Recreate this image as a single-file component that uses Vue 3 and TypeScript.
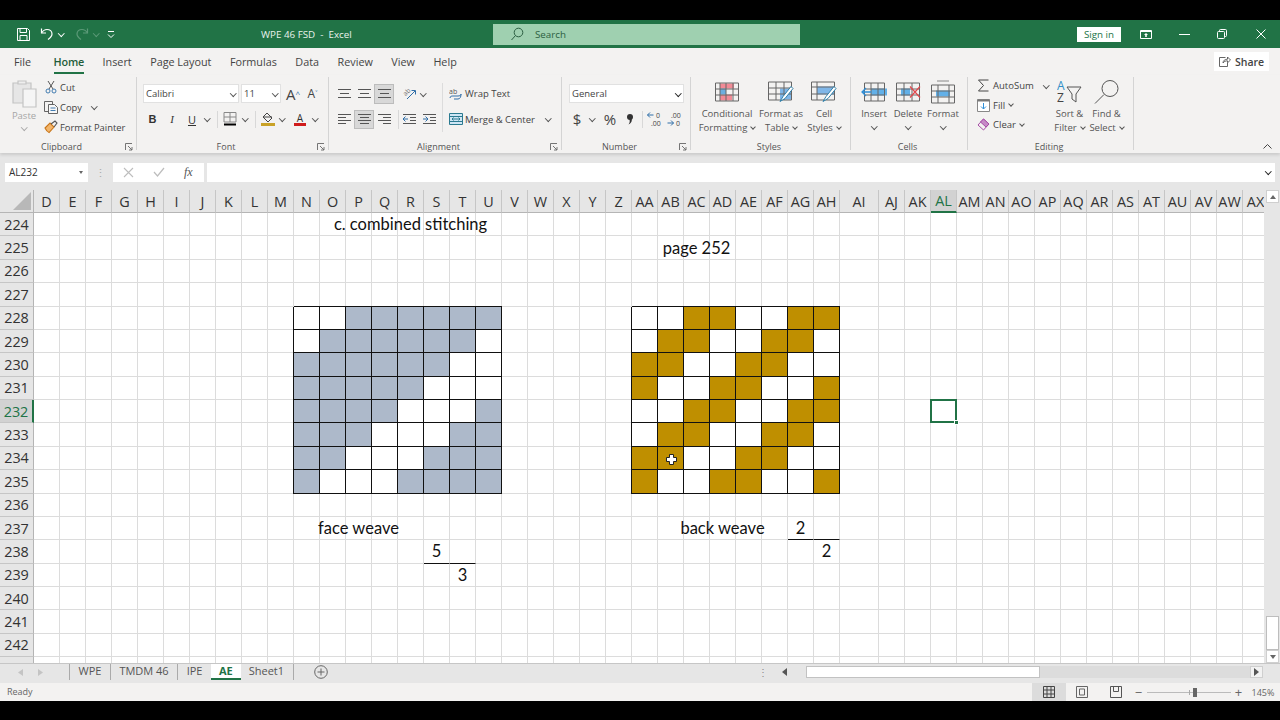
<script setup lang="ts">
const base = 'D E F G H I J K L M N O P Q R S T U V W X Y Z AA AB AC AD AE AF AG AH AI AJ AK AL AM AN AO AP AQ AR AS AT AU AV AW AX'.split(' ')
const rowNums: number[] = []
for (let r = 224; r <= 243; r++) rowNums.push(r)
const texts: Record<string, string> = {
  R224: 'c. combined stitching', AC225: 'page 252', P237: 'face weave', AD237: 'back weave',
  AG237: '2', AH238: '2', S238: '5', T239: '3'
}
const rules = new Set(['AG237', 'AH237', 'S238', 'T238'])
const face = ['00111111', '01111110', '11111100', '11111000', '11110001', '11100011', '11000111', '10001111']
const back = ['00110011', '01100110', '11001100', '10011001', '00110011', '01100110', '11001100', '10011001']
function cellClass(col: string, row: number): string[] {
  const id = col + row
  const out: string[] = []
  const ci = base.indexOf(col)
  if (row >= 228 && row <= 235) {
    const fi = ci - base.indexOf('N')
    const bi = ci - base.indexOf('AA')
    if (fi >= 0 && fi < 8) out.push('pat', face[row - 228][fi] === '1' ? 'grey' : 'blank')
    if (bi >= 0 && bi < 8) out.push('pat', back[row - 228][bi] === '1' ? 'gold' : 'blank')
  }
  if (rules.has(id)) out.push('rule')
  if (id === 'AL232') out.push('sel')
  return out
}
const tabs = ['File', 'Home', 'Insert', 'Page Layout', 'Formulas', 'Data', 'Review', 'View', 'Help']
</script>

<template>
  <div class="screen">
    <header class="titlebar">
      <div class="qa">
        <svg class="i-save" width="15" height="15" viewBox="0 0 15 15" fill="none" stroke="#fff" stroke-width="1"><path d="M1.5 1.5h10l2 2v10h-12z" /><path d="M4 1.5v4h6.5v-4M4 13.5v-5h7v5" /></svg>
        <svg class="i-undo" width="14" height="14" viewBox="0 0 14 14" fill="none" stroke="#fff" stroke-width="1.2"><path d="M1.5 1.5v4.5h4.5" /><path d="M1.5 6C3 3.5 5 2.5 7 2.5c3 0 5 2 5 4.5 0 2.500-2 4-4 5.500" /></svg>
        <span class="chev white" />
        <svg class="i-redo" width="14" height="14" viewBox="0 0 14 14" fill="none" stroke="#5c9a78" stroke-width="1.2"><path d="M12.500 1.500v4.500h-4.500" /><path d="M12.500 6C11 3.500 9 2.500 7 2.500c-3 0-5 2-5 4.500 0 2.500 2 4 4 5.500" /></svg>
        <span class="chev dimwhite" />
        <svg class="i-cust" width="8" height="9" viewBox="0 0 8 9" fill="none" stroke="#fff" stroke-width="1"><path d="M1 1.500h6" /><path d="M1 4.500l3 3 3-3" /></svg>
      </div>
      <div class="doc">WPE 46 FSD&nbsp; -&nbsp; Excel</div>
      <div class="search">
        <svg width="14" height="14" viewBox="0 0 14 14" fill="none" stroke="#2c5f42" stroke-width="1"><circle cx="8.500" cy="5.500" r="4.300" /><path d="M5.500 8.500L1.500 13" /></svg>
        <span>Search</span>
      </div>
      <button class="signin">Sign in</button>
      <svg class="i-disp" width="12" height="9" viewBox="0 0 12 9" fill="none" stroke="#fff"><path d="M.5.500h11v8H.5z" /><path d="M.5 1.500h11" /><path d="M6 3L4 5h1.200v2h1.600V5H8z" fill="#fff" stroke="none" /></svg>
      <svg class="i-min" width="11" height="1" viewBox="0 0 11 1" fill="#fff"><path d="M0 0h11v1H0z" /></svg>
      <svg class="i-rest" width="10" height="10" viewBox="0 0 10 10" fill="none" stroke="#fff"><rect x=".5" y="2.500" width="7" height="7" rx="1" /><path d="M2.500 2.500v-1a1 1 0 0 1 1-1h5a1 1 0 0 1 1 1v5a1 1 0 0 1-1 1h-1" /></svg>
      <svg class="i-close" width="10" height="10" viewBox="0 0 10 10" stroke="#fff"><path d="M.5.500l9 9M9.500.500l-9 9" /></svg>
    </header>

    <nav class="tabs">
      <span v-for="t in tabs" :key="t" class="tab" :class="{ on: t === 'Home' }">{{ t }}</span>
      <button class="share">
        <svg width="12" height="11" viewBox="0 0 12 11" fill="none" stroke="#555" stroke-width=".9"><path d="M6.500 1.500H.5v9h8V7" /><path d="M4 7c0-2.500 2-3.800 4.500-3.800V1L11.500 4 8.500 6.800V4.800C6.500 4.800 5 5.500 4 7z" /></svg>
        Share
      </button>
    </nav>

    <section class="ribbon">
      <div class="group g-clip">
        <div class="body row">
          <div class="paste">
            <svg width="26" height="29" viewBox="0 0 26 29" fill="none" stroke="#c4c4c4" stroke-width="1.2"><path d="M2 4h18v20H2z" fill="#e6e6e6" /><path d="M7 5V2h8v3z" fill="#eee" /><path d="M12 10h13v18H12z" fill="#f5f5f5" /></svg>
            <span class="pl">Paste</span>
            <span class="chev faint" />
          </div>
          <div class="clip-list">
            <div class="cl">
              <svg width="12" height="14" viewBox="0 0 12 14" fill="none" stroke="#444" stroke-width=".9"><path d="M3 1l5 8M9 1L4 9" /><circle cx="3" cy="11" r="2" stroke="#2f6ea8" /><circle cx="9" cy="11" r="2" stroke="#2f6ea8" /></svg>
              <span>Cut</span>
            </div>
            <div class="cl">
              <svg width="14" height="13" viewBox="0 0 14 13" fill="none" stroke="#555" stroke-width=".9"><path d="M.5.500h8v3M.5.500v10h4" /><path d="M4.500 3.500h6l3 3v6h-9z" fill="#f8f8f8" /><path d="M6.500 7h5M6.500 9.500h5" stroke="#2f6ea8" /></svg>
              <span>Copy</span><span class="chev sm-gap" />
            </div>
            <div class="cl">
              <svg width="14" height="14" viewBox="0 0 14 14" fill="none" stroke-width="1.100"><path d="M1 8l5-5 4 4-5 5.500C3.500 12 2 10 1 8z" fill="#f2b56b" stroke="#c9761a" /><path d="M7 4l4-3 2 2-3 4" stroke="#555" /></svg>
              <span>Format Painter</span>
            </div>
          </div>
        </div>
        <div class="glabel launcher">Clipboard
          <svg class="launch" width="8" height="8" viewBox="0 0 8 8" fill="none" stroke="#666" stroke-width=".9"><path d="M.5 7V.5H7M3 3l4 4M7 4v3H4" /></svg>
        </div>
      </div>

      <div class="group g-font">
        <div class="body stack">
          <div class="line">
            <div class="select s-font">Calibri<span class="chev" /></div>
            <div class="select s-size">11<span class="chev" /></div>
            <span class="tb big-a">A<sup>^</sup></span>
            <span class="tb small-a">A<sup>˅</sup></span>
          </div>
          <div class="line">
            <span class="tb w19 bold">B</span>
            <span class="tb w20 ital">I</span>
            <span class="tb w20 under">U</span>
            <span class="cbox"><span class="chev" /></span>
            <span class="vr m5" />
            <span class="tb w20">
              <svg width="14" height="14" viewBox="0 0 14 14" fill="none"><path d="M1 .5h12v9.500H1zM7 .5v9.500M1 5h12" stroke="#888" /><path d="M1 12.500h12" stroke="#000" stroke-width="2" /></svg>
            </span>
            <span class="cbox"><span class="chev" /></span>
            <span class="vr m5" />
            <span class="tb w20">
              <svg width="14" height="14" viewBox="0 0 14 14" fill="none"><path d="M6 1l5 5-4 4-5-5z" stroke="#444" /><path d="M2 5h9" stroke="#444" /><path d="M0 12.500h14" stroke="#c9a227" stroke-width="3" /></svg>
            </span>
            <span class="cbox w9"><span class="chev" /></span>
            <span class="tb w20 m3">
              <svg width="14" height="15" viewBox="0 0 14 15"><text x="7" y="9.500" text-anchor="middle" font-family="Open Sans, sans-serif" font-size="10" fill="#333">A</text><path d="M1 11h12v3H1z" fill="#d01c1c" /></svg>
            </span>
            <span class="cbox"><span class="chev" /></span>
          </div>
        </div>
        <div class="glabel launcher">Font
          <svg class="launch" width="8" height="8" viewBox="0 0 8 8" fill="none" stroke="#666" stroke-width=".9"><path d="M.5 7V.5H7M3 3l4 4M7 4v3H4" /></svg>
        </div>
      </div>

      <div class="group g-align">
        <div class="body row">
          <div class="stack col-a">
            <div class="line">
              <span class="tb w20"><svg width="13" height="9" viewBox="0 0 13 9" stroke="#555"><path d="M0 .5h13M2 4.500h9M0 8.500h13" /></svg></span>
              <span class="tb w20"><svg width="13" height="9" viewBox="0 0 13 9" stroke="#555"><path d="M0 .5h13M2 4.500h9M0 8.500h13" /></svg></span>
              <span class="tb w20 active"><svg width="13" height="9" viewBox="0 0 13 9" stroke="#555"><path d="M0 .5h13M2 4.500h9M0 8.500h13" /></svg></span>
            </div>
            <div class="line">
              <span class="tb w20"><svg width="13" height="11" viewBox="0 0 13 11" stroke="#555"><path d="M0 .5h13M0 3.500h8M0 6.500h13M0 9.500h8" /></svg></span>
              <span class="tb w20 active"><svg width="13" height="11" viewBox="0 0 13 11" stroke="#555"><path d="M0 .5h13M2 3.500h9M0 6.500h13M2 9.500h9" /></svg></span>
              <span class="tb w20"><svg width="13" height="11" viewBox="0 0 13 11" stroke="#555"><path d="M0 .5h13M5 3.500h8M0 6.500h13M5 9.500h8" /></svg></span>
            </div>
          </div>
          <div class="stack col-b">
            <div class="line">
              <span class="tb w20"><svg width="15" height="15" viewBox="0 0 15 15" fill="none" stroke="#666"><text x="1" y="8" transform="rotate(-45 5 6)" font-family="Open Sans, sans-serif" font-size="6.500" fill="#666" stroke="none">ab</text><path d="M5 13l8-8" stroke="#2f6ea8" /><path d="M9.500 4.500h4V8.500" stroke="#2f6ea8" /></svg></span>
              <span class="cbox w8"><span class="chev" /></span>
            </div>
            <div class="line ruled">
              <span class="tb w20"><svg width="13" height="11" viewBox="0 0 13 11" fill="none" stroke="#555"><path d="M0 .5h13M7 3.500h6M7 6.500h6M0 9.500h13" /><path d="M0 5h5M2.500 2.500L0 5l2.500 2.500" stroke="#2f6ea8" /></svg></span>
              <span class="tb w20"><svg width="13" height="11" viewBox="0 0 13 11" fill="none" stroke="#555"><path d="M0 .5h13M7 3.500h6M7 6.500h6M0 9.500h13" /><path d="M0 5h5M2.500 2.500L5 5 2.500 7.500" stroke="#2f6ea8" /></svg></span>
            </div>
          </div>
          <div class="stack col-c">
            <div class="line labelled">
              <svg width="14" height="14" viewBox="0 0 14 14" fill="none"><text x="0" y="6.500" font-family="Open Sans, sans-serif" font-size="7" fill="#555">ab</text><path d="M1 11c0-2 2-2 3-2h5c2 0 3-1 3-2 0 3-1 5-3 5H5" stroke="#2f6ea8" /></svg>
              Wrap Text
            </div>
            <div class="line labelled">
              <svg width="14" height="12" viewBox="0 0 14 12" fill="#cfe6f5" stroke="#2b7a90"><path d="M.5.500h13v11H.5z" /><path d="M.5 3.500h13M.5 8.500h13" /><path d="M3 6h8M3 6l1.500-1.500M3 6l1.500 1.500M11 6L9.500 4.500M11 6L9.500 7.500" fill="none" /></svg>
              Merge &amp; Center<span class="chev gap-chev" />
            </div>
          </div>
        </div>
        <div class="glabel launcher">Alignment
          <svg class="launch" width="8" height="8" viewBox="0 0 8 8" fill="none" stroke="#666" stroke-width=".9"><path d="M.5 7V.5H7M3 3l4 4M7 4v3H4" /></svg>
        </div>
      </div>

      <div class="group g-num">
        <div class="body stack">
          <div class="line">
            <div class="select s-num">General<span class="chev dark" /></div>
          </div>
          <div class="line shift">
            <span class="tb w20 sym">$</span>
            <span class="cbox"><span class="chev" /></span>
            <span class="tb w20 m3 sym">%</span>
            <span class="tb w20">
              <svg width="8" height="12" viewBox="0 0 8 12" fill="#333"><circle cx="4" cy="4" r="3" /><path d="M5.500 5.500C6.500 8 5 10.500 2.500 11.500c1.200-1.500 1.500-3 1-5z" /></svg>
            </span>
            <span class="vr m2" />
            <span class="tb w20"><svg width="17" height="17" viewBox="0 0 17 17"><path d="M0.500 4h6M3 1.500L.5 4 3 6.500" fill="none" stroke="#2f6ea8" /><text x="9" y="7" font-family="Open Sans, sans-serif" font-size="7" fill="#444">0</text><text x="4" y="15" font-family="Open Sans, sans-serif" font-size="7" fill="#444">.00</text></svg></span>
            <span class="tb w20"><svg width="17" height="17" viewBox="0 0 17 17"><text x="4" y="7" font-family="Open Sans, sans-serif" font-size="7" fill="#444">.00</text><path d="M0.500 12h6M4 9.500L6.500 12 4 14.500" fill="none" stroke="#2f6ea8" /><text x="9" y="15" font-family="Open Sans, sans-serif" font-size="7" fill="#444">0</text></svg></span>
          </div>
        </div>
        <div class="glabel launcher">Number
          <svg class="launch" width="8" height="8" viewBox="0 0 8 8" fill="none" stroke="#666" stroke-width=".9"><path d="M.5 7V.5H7M3 3l4 4M7 4v3H4" /></svg>
        </div>
      </div>

      <div class="group g-styles">
        <div class="body row">
          <div class="bigbtn w60">
            <svg width="24" height="19" viewBox="0 0 24 19"><path d="M5 1h14v5H5zM5 12h12v6H5z" fill="#f28b96" /><path d="M5 6h6v6H5z" fill="#6daee0" /><path d="M.5.500h23v18H.5zM.5 6.500h23M.5 12.500h23M5 .5v18M11 .5v18M18 .5v18" fill="none" stroke="#666" /></svg>
            <span class="bl">Conditional</span>
            <span class="bl">Formatting<span class="chev tiny" /></span>
          </div>
          <div class="bigbtn w48">
            <svg width="26" height="21" viewBox="0 0 26 21"><path d="M12 7h11v11H12z" fill="#7fb6e8" /><path d="M.5.500h23v18H.5zM.5 6.500h23M.5 12.500h23M8 .5v18M16 .5v18" fill="none" stroke="#666" /><path d="M12 20l3-5 8-10 2 2-8 10z" fill="#fff" stroke="#2f7fa8" /></svg>
            <span class="bl">Format as</span>
            <span class="bl">Table<span class="chev tiny" /></span>
          </div>
          <div class="bigbtn w38">
            <svg width="26" height="21" viewBox="0 0 26 21"><path d="M6 5h17v8H6z" fill="#7fb6e8" /><path d="M.5.500h23v18H.5zM.5 5.500h23M.5 12.500h23M6 .5v18" fill="none" stroke="#666" /><path d="M12 20l3-5 8-10 2 2-8 10z" fill="#fff" stroke="#2f7fa8" /></svg>
            <span class="bl">Cell</span>
            <span class="bl">Styles<span class="chev tiny" /></span>
          </div>
        </div>
        <div class="glabel l-cells">Styles</div>
      </div>

      <div class="group g-cells">
        <div class="body row">
          <div class="bigbtn w34">
            <svg width="27" height="19" viewBox="0 0 27 19"><path d="M10 6h16v7H10z" fill="#62b0e8" /><path d="M3.500.5h20v18h-20zM3.500 6.500h20M3.500 12.500h20M10 .5v18M17 .5v18" fill="none" stroke="#666" /><path d="M10 9.500H1M5 5.500l-4 4 4 4" fill="none" stroke="#2f8fd8" stroke-width="1.300" /></svg>
            <span class="bl">Insert</span>
            <span class="chev lone" />
          </div>
          <div class="bigbtn w34">
            <svg width="25" height="19" viewBox="0 0 25 19"><path d="M5 6h9v7H5z" fill="#62b0e8" /><path d="M.5.500h23v18H.5zM.5 6.500h23M.5 12.500h23M8 .5v18M16 .5v18" fill="none" stroke="#666" /><path d="M14 4l10 11M24 4L14 15" stroke="#e0474c" stroke-width="1.200" /></svg>
            <span class="bl">Delete</span>
            <span class="chev lone" />
          </div>
          <div class="bigbtn w36">
            <svg width="24" height="23" viewBox="0 0 24 23"><path d="M5 10h14v6H5z" fill="#62b0e8" /><path d="M.5 4.500h23v18H.5zM.5 10.500h23M.5 16.500h23M7 4.500v18M18 4.500v18" fill="none" stroke="#666" /><path d="M6 .5h12" stroke="#888" /></svg>
            <span class="bl">Format</span>
            <span class="chev lone" />
          </div>
        </div>
        <div class="glabel l-cells">Cells</div>
      </div>

      <div class="group g-edit">
        <div class="body row">
          <div class="edit-list">
            <div class="el">
              <svg width="12" height="13" viewBox="0 0 12 13" fill="none" stroke="#444"><path d="M11 1H1l5 5.500L1 12h10" /></svg>
              <span>AutoSum</span><span class="chev auto-chev" />
            </div>
            <div class="el">
              <svg width="13" height="13" viewBox="0 0 13 13" fill="none"><path d="M.5.500h12v12H.5z" fill="#fff" stroke="#888" /><path d="M.5.500h12v2H.5z" fill="#777" /><path d="M6.500 4v6M4 7.500L6.500 10 9 7.500" stroke="#2f8fd8" /></svg>
              <span>Fill</span><span class="chev tiny" />
            </div>
            <div class="el">
              <svg width="13" height="13" viewBox="0 0 13 13" fill="none" stroke="#a64ca6"><path d="M1 7l5.500-6L12 6l-5.500 6z" /><path d="M6.500 1L12 6 9 9 3.500 4z" fill="#c78ac7" /></svg>
              <span>Clear</span><span class="chev tiny" />
            </div>
          </div>
          <div class="bigbtn w36">
            <svg width="25" height="26" viewBox="0 0 25 26" fill="none"><text x="0" y="11" font-family="Open Sans, sans-serif" font-size="12" fill="#2f8fc8">A</text><text x="0" y="23" font-family="Open Sans, sans-serif" font-size="12" fill="#444">Z</text><path d="M10 8h14l-5 7v8l-4-3v-5z" stroke="#555" /></svg>
            <span class="bl">Sort &amp;</span>
            <span class="bl">Filter<span class="chev tiny" /></span>
          </div>
          <div class="bigbtn w38">
            <svg width="25" height="25" viewBox="0 0 25 25" fill="none" stroke="#555"><circle cx="16" cy="9" r="8" /><path d="M10 15L1 24" /></svg>
            <span class="bl">Find &amp;</span>
            <span class="bl">Select<span class="chev tiny" /></span>
          </div>
        </div>
        <div class="glabel l-cells">Editing</div>
      </div>

      <svg class="collapse" width="9" height="5" viewBox="0 0 9 5" fill="none" stroke="#444"><path d="M.5 4.500l4-4 4 4" /></svg>
    </section>

    <div class="formula">
      <div class="namebox">AL232<span class="drop" /></div>
      <span class="dots">⋮</span>
      <div class="fxbox">
        <svg width="11" height="11" viewBox="0 0 11 11" stroke="#bdbdbd" stroke-width="1.100"><path d="M1 1l9 9M10 1l-9 9" /></svg>
        <svg width="12" height="10" viewBox="0 0 12 10" fill="none" stroke="#bdbdbd" stroke-width="1.200"><path d="M1 5l3.500 4L11 1" /></svg>
        <span class="fx">fx</span>
      </div>
      <div class="finput"><span class="chev dark" /></div>
    </div>

    <div class="sheet">
      <div class="grid">
        <div class="corner"><span class="tri" /></div>
        <div v-for="c in base" :key="c" class="colh" :class="{ cur: c === 'AL' }">{{ c }}</div>
        <template v-for="r in rowNums" :key="r">
          <div class="rowh" :class="{ cur: r === 232 }">{{ r }}</div>
          <div v-for="c in base" :key="c + r" class="cell" :class="cellClass(c, r)">
            <span v-if="texts[c + r]" class="val">{{ texts[c + r] }}</span>
            <svg v-if="c + r === 'AB234'" class="cursor" width="11" height="11" viewBox="0 0 11 11"><path d="M3.500.5h4v3h3v4h-3v3h-4v-3h-3v-4h3z" fill="#fff" stroke="#222" /></svg>
          </div>
        </template>
      </div>
      <aside class="vscroll">
        <button class="sbtn"><span class="up" /></button>
        <div class="vtrack"><div class="vthumb" /></div>
        <button class="sbtn"><span class="down" /></button>
      </aside>
    </div>

    <div class="sheettabs">
      <div class="nav">
        <svg width="5" height="7" viewBox="0 0 5 7" fill="#c4c4c4"><path d="M5 0v7L0 3.500z" /></svg>
        <svg width="5" height="7" viewBox="0 0 5 7" fill="#c4c4c4"><path d="M0 0v7l5-3.500z" /></svg>
      </div>
      <span class="stab">WPE</span>
      <span class="stab">TMDM 46</span>
      <span class="stab">IPE</span>
      <span class="stab act">AE</span>
      <span class="stab">Sheet1</span>
      <svg class="plus" width="14" height="14" viewBox="0 0 14 14" fill="none" stroke="#666"><circle cx="7" cy="7" r="6.300" /><path d="M7 3.500v7M3.500 7h7" /></svg>
      <span class="hdots">⋮</span>
      <svg class="harrow" width="5" height="8" viewBox="0 0 5 8" fill="#555"><path d="M5 0v8L0 4z" /></svg>
      <div class="htrack">
        <div class="hthumb" />
        <div class="hright"><svg width="5" height="8" viewBox="0 0 5 8" fill="#555"><path d="M0 0v8l5-4z" /></svg></div>
      </div>
    </div>

    <footer class="status">
      <span class="ready">Ready</span>
      <div class="views">
        <span class="vw on"><svg width="12" height="12" viewBox="0 0 12 12" fill="none" stroke="#444"><path d="M.5.500h11v11H.5zM.5 4h11M.5 8h11M4 .5v11M8 .5v11" /></svg></span>
        <span class="vw"><svg width="12" height="12" viewBox="0 0 12 12" fill="none" stroke="#666"><path d="M.5.500h11v11H.5zM3.500 3h5v6h-5z" /></svg></span>
        <span class="vw"><svg width="12" height="12" viewBox="0 0 12 12" fill="none" stroke="#555"><path d="M.5.500h11v11H.5zM3.500.5v5h5v-5" /></svg></span>
      </div>
      <div class="zoom">
        <span class="zm">−</span>
        <div class="slider"><span class="tick" /><span class="knob" /></div>
        <span class="zm">+</span>
        <span class="pct">145%</span>
      </div>
    </footer>
  </div>
</template>

<style>
html, body { margin: 0; background: #000; }
</style>

<style scoped>
.screen { width: 1280px; height: 720px; background: #000; padding: 20px 0; box-sizing: border-box; display: flex; flex-direction: column; font-family: "Open Sans", "Noto Sans", sans-serif; color: #444; overflow: hidden; }
button { font: inherit; border: 0; padding: 0; }

.titlebar { height: 28px; background: #217346; display: flex; align-items: center; color: #fff; flex: none; }
.qa { width: 261px; padding-left: 16px; box-sizing: border-box; display: flex; align-items: center; }
.i-undo { margin-left: 9px; }
.i-redo { margin-left: 11px; }
.qa .chev { margin-left: 5px; }
.i-cust { margin-left: 9px; }
.doc { width: 232px; font-size: 9.800px; color: #e8f2ec; white-space: nowrap; }
.search { width: 307px; height: 21px; background: #9fd0b0; display: flex; align-items: center; padding-left: 17px; box-sizing: border-box; font-size: 9.800px; color: #2c5f42; gap: 11px; }
.signin { margin-left: 277px; width: 44px; height: 15px; background: #fff; color: #217346; font-size: 9.800px; line-height: 15px; }
.i-disp { margin-left: 19px; }
.i-min { margin-left: 27px; }
.i-rest { margin-left: 27px; }
.i-close { margin-left: 29px; }

.tabs { height: 27px; background: #f3f2f1; display: flex; align-items: center; padding-left: 14px; gap: 18.500px; font-size: 10.800px; flex: none; position: relative; }
.tab { height: 24px; line-height: 23px; box-sizing: border-box; white-space: nowrap; color: #444; }
.tab.on { border-bottom: 2px solid #217346; font-weight: 600; color: #1f5d3a; letter-spacing: -.2px; }
.tab:first-child { margin-right: 4px; }
.share { margin-left: auto; margin-right: 11px; width: 55px; height: 19px; background: #fff; color: #444; font-size: 10.500px; font-weight: 600; display: flex; align-items: center; justify-content: center; gap: 4px; }

.ribbon { height: 78px; background: #f3f2f1; display: flex; flex: none; position: relative; box-shadow: 0 2px 3px rgba(0,0,0,.12); z-index: 2; font-size: 9.500px; }
.group { display: flex; flex-direction: column; box-sizing: border-box; position: relative; }
.group::after { content: ""; position: absolute; right: 0; top: 2px; bottom: 3px; width: 1px; background: #d4d4d4; }
.g-clip { width: 137px; }
.g-font { width: 192px; }
.g-align { width: 233px; }
.g-num { width: 129px; }
.g-styles { width: 160px; }
.g-cells { width: 117px; }
.g-edit { width: 166px; }
.body { height: 65px; box-sizing: border-box; }
.row { display: flex; }
.stack { display: flex; flex-direction: column; gap: 6px; padding-top: 9px; }
.g-font .body { padding-left: 6px; }
.g-num .body { padding-left: 7px; }
.glabel { height: 13px; line-height: 13px; text-align: center; font-size: 9px; color: #555; position: relative; }
.glabel.launcher { padding-right: 14px; }
.glabel.l-cells { padding-right: 4px; }
.launch { position: absolute; right: 4px; top: 3px; }

.chev { display: inline-block; width: 3.500px; height: 3.500px; border-right: 1px solid #555; border-bottom: 1px solid #555; transform: rotate(45deg); margin-bottom: 2px; flex: none; }
.chev.white { border-color: #fff; }
.chev.dimwhite { border-color: #5c9a78; }
.chev.faint { border-color: #aaa; }
.chev.dark { border-color: #222; }
.chev.tiny { margin-left: 4px; width: 3px; height: 3px; }
.chev.lone { margin-top: 3px; }
.chev.sm-gap { margin-left: 10px; }
.chev.gap-chev { margin-left: 9px; }
.chev.auto-chev { margin-left: 10px; }

.paste { width: 44px; display: flex; flex-direction: column; align-items: center; padding-top: 4px; padding-left: 4px; color: #a6a6a6; box-sizing: border-box; flex: none; }
.pl { margin-top: 1px; line-height: 14px; font-size: 9.500px; }
.paste .chev { margin-top: 2px; }
.clip-list { display: flex; flex-direction: column; padding-top: 2px; }
.cl { display: flex; align-items: center; height: 20px; white-space: nowrap; font-size: 9.400px; }
.cl svg { width: 14px; margin-right: 2px; }

.line { display: flex; align-items: center; height: 19.500px; }
.select { height: 19px; background: #fff; border: 1px solid #e1e1e1; box-sizing: border-box; display: flex; align-items: center; justify-content: space-between; padding: 0 3px 0 2px; font-size: 9.500px; color: #444; }
.s-font { width: 96px; }
.s-size { width: 40px; margin-left: 2px; }
.s-num { width: 115px; }
.tb { height: 19.500px; display: inline-flex; align-items: center; justify-content: center; flex: none; box-sizing: border-box; }
.w19 { width: 19px; }
.w20 { width: 20px; }
.m3 { margin-left: 3px; }
.big-a { width: 20px; margin-left: 2px; font-size: 15px; color: #444; }
.small-a { width: 19px; font-size: 12px; color: #444; }
.big-a sup, .small-a sup { font-size: 8px; color: #2f6ea8; line-height: 0; vertical-align: 5px; }
.bold { font-weight: 700; font-size: 11px; font-family: "Liberation Sans", sans-serif; color: #333; }
.ital { font-style: italic; font-size: 11px; font-family: "Liberation Serif", serif; color: #333; }
.under { text-decoration: underline; font-size: 11px; color: #333; }
.cbox { width: 10px; display: inline-flex; justify-content: center; flex: none; }
.cbox.w9 { width: 9px; }
.cbox.w8 { width: 8px; }
.vr { width: 1px; height: 17px; background: #d8d8d8; flex: none; }
.vr.m5 { margin: 0 2px 0 5px; }
.vr.m2 { margin: 0 2px 0 2px; }
.active { background: #d8d8d8; border: 1px solid #bcbcbc; }
.col-a { width: 60px; margin-left: 5px; margin-right: 4px; flex: none; }
.col-b { width: 41px; flex: none; }
.col-b .line { padding-left: 1px; box-sizing: border-box; }
.ruled { border-left: 1px solid #d8d8d8; padding-left: 0 !important; }
.col-c { margin-left: 3px; padding-left: 7px; position: relative; flex: none; }
.col-c::before { content: ""; position: absolute; left: 0; top: 8px; bottom: 8px; width: 1px; background: #dcdcdc; }
.labelled { gap: 2px; font-size: 9.500px; white-space: nowrap; }
.shift { margin-left: -2px; }
.sym { font-size: 15px; color: #444; }

.bigbtn { display: flex; flex-direction: column; align-items: center; flex: none; box-sizing: border-box; }
.bigbtn svg { height: 26px; margin-top: 4px; flex: none; }
.bl { line-height: 14px; white-space: nowrap; font-size: 9.500px; color: #555; }
.bigbtn .bl:first-of-type { margin-top: 2px; }
.w60 { width: 60px; }
.w48 { width: 48px; }
.w38 { width: 38px; }
.w34 { width: 34px; }
.w36 { width: 36px; }
.g-styles .body, .g-cells .body { padding-left: 6px; }
.edit-list { width: 78.500px; margin-left: 5px; padding-top: 1px; flex: none; }
.el { height: 19.500px; display: flex; align-items: center; font-size: 9.500px; gap: 0; white-space: nowrap; }
.el svg { width: 13px; margin: 0 3px 0 4px; flex: none; }
.collapse { position: absolute; right: 8px; bottom: 4px; }

.formula { height: 37px; background: #e6e6e6; display: flex; align-items: center; padding-left: 5px; padding-top: 1px; box-sizing: border-box; flex: none; }
.namebox { width: 83px; height: 19px; background: #fff; display: flex; align-items: center; justify-content: space-between; padding: 0 5px 0 4px; box-sizing: border-box; font-size: 10px; color: #333; }
.drop { width: 0; height: 0; border-left: 2.500px solid transparent; border-right: 2.500px solid transparent; border-top: 3px solid #666; }
.dots { width: 25px; text-align: center; color: #aaa; font-size: 11px; }
.fxbox { width: 91px; height: 19px; background: #fff; display: flex; align-items: center; gap: 19px; padding-left: 10px; box-sizing: border-box; flex: none; }
.fx { font-family: "Liberation Serif", serif; font-style: italic; font-size: 12px; color: #555; }
.finput { width: 1068px; height: 19px; margin-left: 3px; background: #fff; display: flex; align-items: center; justify-content: flex-end; padding-right: 5px; box-sizing: border-box; flex: none; }

.sheet { height: 473px; display: flex; flex: none; background: #fff; overflow: hidden; }
.grid { width: 1264px; height: 473px; overflow: hidden; display: grid; grid-template-columns: 34px repeat(31, 26px) 39px repeat(15, 26px); grid-template-rows: 23px repeat(20, 23.390px); flex: none; }
.corner { background: #e6e6e6; border-right: 1px solid #b5b5b5; border-bottom: 1px solid #b5b5b5; box-sizing: border-box; position: relative; }
.tri { position: absolute; right: 2px; bottom: 2px; width: 0; height: 0; border-left: 18px solid transparent; border-bottom: 18px solid #b8b8b8; }
.colh { background: #e6e6e6; border-right: 1px solid #c6c6c6; border-bottom: 1px solid #b5b5b5; box-sizing: border-box; display: flex; align-items: center; justify-content: center; font-size: 14.400px; color: #333; white-space: nowrap; overflow: hidden; }
.colh.cur { background: #d2d2d2; color: #217346; border-bottom: 2px solid #217346; }
.rowh { background: #e6e6e6; border-right: 1px solid #b5b5b5; border-bottom: 1px solid #c6c6c6; box-sizing: border-box; display: flex; align-items: center; justify-content: center; font-size: 14.400px; color: #333; }
.rowh.cur { background: #d2d2d2; color: #217346; border-right: 2px solid #217346; }
.cell { border-right: 1px solid #dcdcdc; border-bottom: 1px solid #dcdcdc; box-sizing: border-box; display: flex; align-items: center; justify-content: center; position: relative; min-width: 0; background: #fff; }
.val { font-family: Lato, "Open Sans", sans-serif; font-size: 16.500px; color: #111; white-space: nowrap; position: relative; z-index: 1; }
.pat { border-right-color: #111; border-bottom-color: #111; box-shadow: -1px 0 0 #111, 0 -1px 0 #111; }
.grey { background: #adb9ca; }
.gold { background: #bf8f00; }
.rule { border-bottom-color: #111; }
.sel::after { content: ""; position: absolute; left: -1px; top: -1px; right: -1px; bottom: -1px; border: 2px solid #217346; z-index: 2; pointer-events: none; }
.sel::before { content: ""; position: absolute; right: -3px; bottom: -3px; width: 5px; height: 5px; background: #217346; border: 1px solid #fff; box-sizing: border-box; z-index: 3; }
.cursor { position: absolute; left: 8px; top: 7px; z-index: 4; }

.vscroll { width: 16px; background: #e6e6e6; display: flex; flex-direction: column; padding-left: 2px; box-sizing: border-box; }
.sbtn { width: 13px; height: 13px; background: #fff; border: 1px solid #cfcfcf; display: flex; align-items: center; justify-content: center; box-sizing: border-box; flex: none; }
.up { border-left: 3.500px solid transparent; border-right: 3.500px solid transparent; border-bottom: 4px solid #666; }
.down { border-left: 3.500px solid transparent; border-right: 3.500px solid transparent; border-top: 4px solid #666; }
.vtrack { flex: 1; display: flex; flex-direction: column; justify-content: flex-end; width: 13px; }
.vthumb { height: 34px; background: #fff; border: 1px solid #bdbdbd; box-sizing: border-box; }

.sheettabs { height: 20px; background: #e6e6e6; display: flex; align-items: center; flex: none; border-top: 1px solid #c6c6c6; box-sizing: border-box; padding-bottom: 3px; font-size: 11px; color: #555; }
.nav { width: 69px; padding-left: 18px; box-sizing: border-box; display: flex; gap: 15px; flex: none; }
.stab { height: 16px; line-height: 13px; padding: 0 8.500px; box-sizing: border-box; white-space: nowrap; border-left: 1px solid #aaa; background-clip: padding-box; }
.stab.act { background: #fff; color: #217346; font-weight: 700; border-left: 0; border-bottom: 2px solid #217346; padding: 0 8px; }
.stab.act + .stab { border-left: 0; border-right: 1px solid #aaa; padding: 0 9px 0 8px; }
.plus { margin-left: 20px; flex: none; }
.hdots { margin-left: 430px; width: 8px; color: #888; font-size: 10px; text-align: center; }
.harrow { margin-left: 16px; flex: none; }
.htrack { margin-left: 19px; width: 457px; height: 12px; display: flex; background: #dcdcdc; flex: none; }
.hthumb { width: 234px; background: #fff; border: 1px solid #c2c2c2; box-sizing: border-box; flex: none; }
.hright { margin-left: auto; width: 13px; background: #f2f2f2; border: 1px solid #cfcfcf; box-sizing: border-box; display: flex; align-items: center; justify-content: center; }

.status { height: 18px; background: #f3f2f1; display: flex; align-items: stretch; font-size: 9px; color: #666; flex: none; }
.ready { padding-left: 7px; line-height: 18px; width: 1025px; flex: none; }
.views { display: flex; flex: none; }
.vw { width: 33.500px; display: flex; align-items: center; justify-content: center; }
.vw.on { background: #dcdcdc; }
.zoom { display: flex; align-items: center; margin-left: 1px; flex: none; }
.zm { width: 10px; text-align: center; font-size: 13px; color: #666; }
.slider { width: 84px; height: 1px; background: #bbb; margin: 0 3px; position: relative; }
.tick { position: absolute; left: 42px; top: -2px; width: 1px; height: 5px; background: #aaa; }
.knob { position: absolute; left: 46px; top: -4px; width: 4px; height: 9px; background: #666; }
.pct { margin-left: 8px; font-size: 9px; color: #666; }
</style>
